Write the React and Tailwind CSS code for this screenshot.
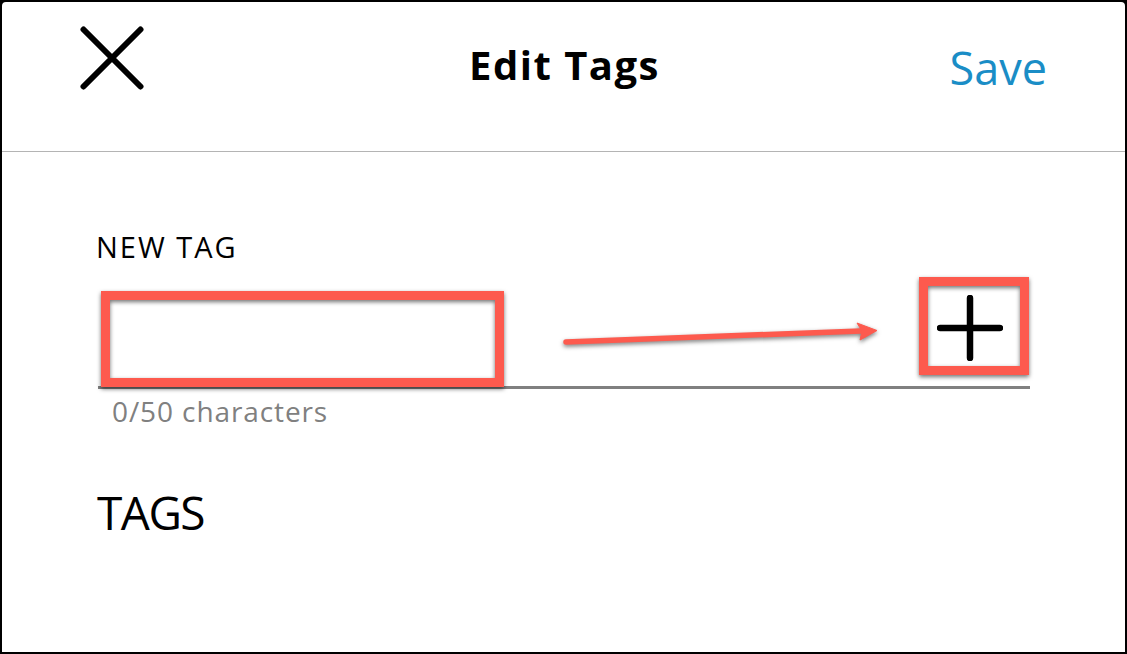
import React from "react";

export default function App() {
  return (
    <div className="w-[1127px] h-[654px] bg-black">
      <div className="w-full h-full border-2 border-black rounded-t-[6px] bg-white overflow-hidden font-['Open_Sans',sans-serif] text-black">
        {/* header */}
        <div className="h-[150px] border-b border-[#b4b4b4] grid grid-cols-[1fr_auto_1fr] items-start">
          <div>
            <svg className="ml-[78px] mt-[24px]" width="64" height="64" viewBox="0 0 64 64">
              <path d="M3.5 3.5 L60.5 60.5 M60.5 3.5 L3.5 60.5" stroke="#000" strokeWidth="6" strokeLinecap="round" fill="none" />
            </svg>
          </div>
          <div className="mt-[43px] ml-[2px] text-[40px] leading-none font-bold tracking-[1.5px]">Edit Tags</div>
          <div className="justify-self-end mr-[78px] mt-[43px] text-[45px] leading-none text-[#1a8dc6]">Save</div>
        </div>
        {/* body */}
        <div className="pl-[94px] pr-[95px]">
          <div className="mt-[80px] text-[29px] leading-none tracking-[2px]">NEW TAG</div>
          <div className="relative mt-[15px] ml-[2px] h-[113px] border-b-[3px] border-[#808080] flex items-start justify-between">
            <input className="mt-[24px] ml-[12px] w-[380px] h-[70px] outline-none bg-transparent text-[28px]" />
            <div className="mr-[27px] mt-[19px] w-[66px] h-[66px] flex items-center justify-center">
              <svg width="66" height="66" viewBox="0 0 66 66">
                <path d="M33 3 L33 63 M3 33 L63 33" stroke="#000" strokeWidth="6.5" strokeLinecap="round" fill="none" />
              </svg>
            </div>
            {/* annotations */}
            <div className="absolute left-[3px] top-[15px] w-[403px] h-[96px] border-[9px] border-[#fd5a4e] drop-shadow-[0_2px_2px_rgba(0,0,0,0.55)]" />
            <div className="absolute left-[821px] top-[1px] w-[110px] h-[98px] border-[9px] border-[#fd5a4e] drop-shadow-[0_2px_2px_rgba(0,0,0,0.55)]" />
            <svg className="absolute left-[460px] top-[40px] drop-shadow-[0_2px_2px_rgba(0,0,0,0.5)]" width="330" height="35" viewBox="0 0 330 35">
              <path d="M8 26 L303 15" stroke="#fd5a4e" strokeWidth="5.5" strokeLinecap="round" fill="none" />
              <path d="M319 14.5 L299 7 L304 15 L302 24 Z" fill="#fd5a4e" stroke="#fd5a4e" strokeWidth="1" strokeLinejoin="round" />
            </svg>
          </div>
          <div className="mt-[8px] ml-[16px] text-[28px] leading-none text-[#808080] tracking-[0.9px]">0/50 characters</div>
          <div className="mt-[64px] ml-[1px] text-[46px] leading-none tracking-[-1.5px]">TAGS</div>
        </div>
      </div>
    </div>
  );
}
